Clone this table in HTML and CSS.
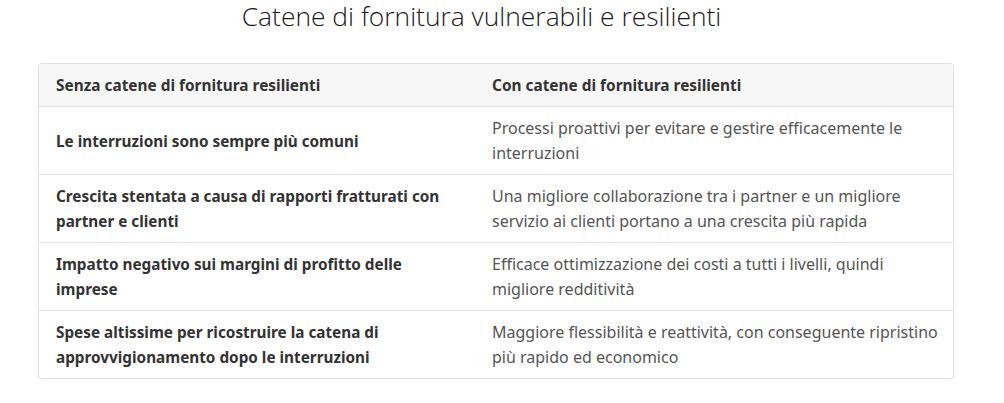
FILE: index.html
```html
<!DOCTYPE html>
<html lang="it">
<head>
<meta charset="utf-8">
<link rel="stylesheet" href="styles.css">
</head>
<body>
<h1 class="title">Catene di fornitura vulnerabili e resilienti</h1>
<div class="card">
<table class="cmp">
<thead>
<tr><th class="c1">Senza catene di fornitura resilienti</th><th class="c2">Con catene di fornitura resilienti</th></tr>
</thead>
<tbody>
<tr><td class="c1">Le interruzioni sono sempre più comuni</td><td class="c2">Processi proattivi per evitare e gestire efficacemente le interruzioni</td></tr>
<tr><td class="c1">Crescita stentata a causa di rapporti fratturati con partner e clienti</td><td class="c2">Una migliore collaborazione tra i partner e un migliore servizio ai clienti portano a una crescita più rapida</td></tr>
<tr><td class="c1">Impatto negativo sui margini di profitto delle imprese</td><td class="c2">Efficace ottimizzazione dei costi a tutti i livelli, quindi migliore redditività</td></tr>
<tr><td class="c1">Spese altissime per ricostruire la catena di approvvigionamento dopo le interruzioni</td><td class="c2">Maggiore flessibilità e reattività, con conseguente ripristino più rapido ed economico</td></tr>
</tbody>
</table>
</div>
</body>
</html>
```
FILE: styles.css
```css
html, body {
  margin: 0;
  padding: 0;
  background: #ffffff;
}
body {
  font-family: "Noto Sans", "Open Sans", sans-serif;
  color: #333;
}
.title {
  margin: 0;
  padding: 0 41px 0 0;
  height: 63px;
  text-align: center;
  font-family: "Open Sans", sans-serif;
  font-weight: 300;
  font-size: 26.4px;
  line-height: 32px;
  color: #1a1a1a;
}
.card {
  margin-left: 38px;
  width: 914px;
  border: 1px solid #e0e0e0;
  border-radius: 4px;
  overflow: hidden;
  box-shadow: 0 1px 2px rgba(0,0,0,0.06);
}
.cmp {
  width: 100%;
  border-collapse: collapse;
  table-layout: fixed;
}
.cmp th, .cmp td {
  padding: 9px 12px 8px 17px;
  font-size: 16px;
  line-height: 25px;
  text-align: left;
  vertical-align: middle;
}
.cmp th {
  background: #f7f7f7;
  font-size: 15.4px;
  font-weight: 700;
  color: #333;
  border-bottom: 1px solid #e3e3e3;
}
.cmp tbody tr + tr td {
  border-top: 1px solid #e3e3e3;
}
.cmp .c1 {
  width: 407px;
}
.cmp td.c1 {
  font-size: 15.3px;
  font-weight: 700;
  color: #333;
}
.cmp td.c2 {
  color: #555;
}
```
